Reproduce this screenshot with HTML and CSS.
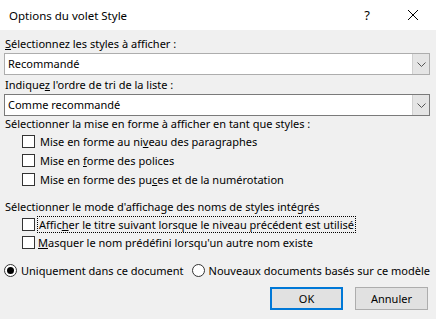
FILE: index.html
```html
<!DOCTYPE html>
<html lang="fr">

<head>
  <meta charset="UTF-8">
  <meta name="viewport" content="width=device-width, initial-scale=1.0">
  <title>Options du volet Style</title>
  <link rel="stylesheet" href="styles.css">
</head>

<body>
  <div class="dialog">
    <div class="titlebar">
      <span class="title">Options du volet Style</span>
      <span class="help">?</span>
      <span class="close">
        <svg width="12" height="12" viewBox="0 0 12 12">
          <path d="M1 1 L11 11 M11 1 L1 11" stroke="#000" stroke-width="1" />
        </svg>
      </span>
    </div>

    <div class="content">
      <div class="label"><u>S</u>électionnez les styles à afficher :</div>
      <div class="combo light">
        <span class="combo-text">Recommandé</span>
        <span class="combo-btn"><svg width="9" height="5" viewBox="0 0 9 5"><path d="M0.5 0.5 L4.5 4.5 L8.5 0.5" fill="none" stroke="#555" /></svg></span>
      </div>

      <div class="label second">Indique<u>z</u> l'ordre de tri de la liste :</div>
      <div class="combo">
        <span class="combo-text">Comme recommandé</span>
        <span class="combo-btn"><svg width="9" height="5" viewBox="0 0 9 5"><path d="M0.5 0.5 L4.5 4.5 L8.5 0.5" fill="none" stroke="#555" /></svg></span>
      </div>

      <div class="label">Sélectionner la mise en forme à afficher en tant que styles :</div>
      <div class="checks">
        <div class="check"><span class="box"></span><span>Mise en forme au ni<u>v</u>eau des paragraphes</span></div>
        <div class="check"><span class="box"></span><span>Mise en <u>f</u>orme des polices</span></div>
        <div class="check"><span class="box"></span><span>Mise en forme des pu<u>c</u>es et de la numérotation</span></div>
      </div>

      <div class="label group">Sélectionner le mode d'affichage des noms de styles intégrés</div>
      <div class="checks tight">
        <div class="check"><span class="box"></span><span class="focus">Affic<u>h</u>er le titre suivant lorsque le niveau précédent est utilisé</span></div>
        <div class="check"><span class="box"></span><span><u>M</u>asquer le nom prédéfini lorsqu'un autre nom existe</span></div>
      </div>

      <div class="radios">
        <div class="radio"><span class="dot on"></span><span>Uniquement dans ce document</span></div>
        <div class="radio"><span class="dot"></span><span>Nouveaux documents basés sur ce modèle</span></div>
      </div>

      <div class="buttons">
        <button class="btn default">OK</button>
        <button class="btn">Annuler</button>
      </div>
    </div>
  </div>
</body>

</html>
```

FILE: styles.css
```css
body {
  margin: 0;
  background-color: #f0f0f0;
  font-family: 'Noto Sans', sans-serif;
  font-size: 11px;
  color: #000;
}

.dialog {
  width: 436px;
  height: 319px;
  overflow: hidden;
}

.titlebar {
  height: 30px;
  background-color: #fff;
  display: flex;
  align-items: center;
}

.title {
  flex: 1;
  padding-left: 9px;
  font-size: 11.5px;
}

.help {
  width: 46px;
  text-align: center;
  font-size: 13px;
}

.close {
  width: 46px;
  display: flex;
  justify-content: center;
}

.content {
  padding: 6px 6px 0 4px;
}

.label {
  height: 16px;
  line-height: 16px;
  padding-left: 1px;
  white-space: nowrap;
}

.label.second {
  margin-top: 2px;
}

.label.group {
  margin-top: 10px;
}

.combo {
  margin-top: 1px;
  height: 22px;
  box-sizing: border-box;
  border: 1px solid #7a7a7a;
  background-color: #fff;
  display: flex;
}

.combo.light {
  border-color: #adadad;
}

.combo-text {
  flex: 1;
  line-height: 20px;
  padding-left: 3px;
}

.combo-btn {
  width: 16px;
  background-color: #e5e5e5;
  border-left: 1px solid #d0d0d0;
  display: flex;
  align-items: center;
  justify-content: center;
}

.checks {
  padding-left: 18px;
}

.check {
  height: 19px;
  display: flex;
  align-items: center;
  gap: 5px;
  white-space: nowrap;
}

.tight .check {
  height: 18px;
  gap: 3px;
}

.box {
  width: 13px;
  height: 13px;
  box-sizing: border-box;
  border: 1px solid #333;
  background-color: #fff;
}

.focus {
  outline: 1px dotted #000;
  padding: 0 1px;
}

.radios {
  margin-top: 11px;
  display: flex;
  gap: 8px;
}

.radio {
  height: 16px;
  display: flex;
  align-items: center;
  gap: 4px;
  white-space: nowrap;
}

.dot {
  width: 13px;
  height: 13px;
  box-sizing: border-box;
  border: 1px solid #333;
  border-radius: 50%;
  background-color: #fff;
  display: flex;
  align-items: center;
  justify-content: center;
}

.dot.on::after {
  content: '';
  width: 7px;
  height: 7px;
  border-radius: 50%;
  background-color: #000;
}

.buttons {
  margin-top: 9px;
  display: flex;
  justify-content: flex-end;
  gap: 12px;
  padding-right: 2px;
}

.btn {
  width: 73px;
  height: 23px;
  box-sizing: border-box;
  background-color: #e1e1e1;
  border: 1px solid #adadad;
  font-family: 'Noto Sans', sans-serif;
  font-size: 11px;
  padding: 0;
}

.btn.default {
  border: 2px solid #0078d7;
}
```
